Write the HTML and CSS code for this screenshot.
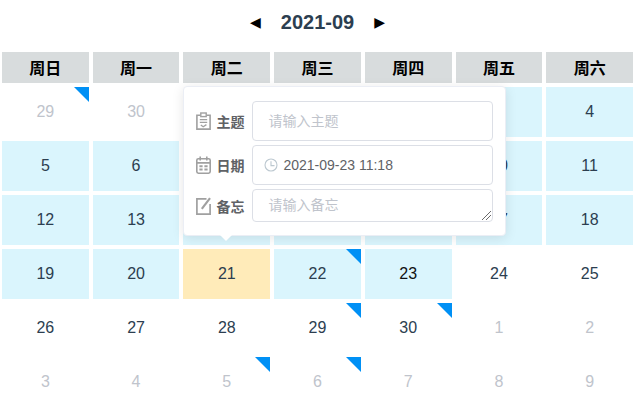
FILE: index.html
```html
<!DOCTYPE html>
<html lang="zh-CN">
<head>
<meta charset="utf-8">
<title>Calendar</title>
<link rel="stylesheet" href="styles.css">
</head>
<body>
<div class="calendar">
  <header class="cal-head">
    <span class="arrow">◀</span>
    <span class="month">2021-09</span>
    <span class="arrow">▶</span>
  </header>
  <div class="grid">
    <div class="wk">周日</div><div class="wk">周一</div><div class="wk">周二</div><div class="wk">周三</div><div class="wk">周四</div><div class="wk">周五</div><div class="wk">周六</div>

    <div class="day muted mark">29</div><div class="day muted">30</div><div class="day muted">31</div><div class="day busy">1</div><div class="day busy">2</div><div class="day busy">3</div><div class="day busy">4</div>
    <div class="day busy">5</div><div class="day busy">6</div><div class="day busy">7</div><div class="day busy">8</div><div class="day busy">9</div><div class="day busy">10</div><div class="day busy">11</div>
    <div class="day busy">12</div><div class="day busy">13</div><div class="day busy">14</div><div class="day busy">15</div><div class="day busy">16</div><div class="day busy">17</div><div class="day busy">18</div>
    <div class="day busy">19</div><div class="day busy">20</div>
    <div class="day today">21
      <div class="popover">
        <div class="row r-tall">
          <label class="lbl">
            <svg class="ico" viewBox="0 0 15 18" fill="none" stroke="#a0a0a0" stroke-width="1.6"><path d="M4.5 3.2H.9v13.9h13.2V3.2h-3.6"/><rect x="4.8" y="1" width="5.4" height="3.6" fill="#fff" stroke-width="1.4"/><path d="M3.8 7.6h7.4M3.8 10.4h7.4M4.8 13l2.4 1.8L10.4 12.6" stroke-width="1.3"/></svg>
            <span>主题</span>
          </label>
          <div class="input ph">请输入主题</div>
        </div>
        <div class="row r-tall">
          <label class="lbl">
            <svg class="ico" viewBox="0 0 15 18" fill="none" stroke="#a0a0a0" stroke-width="1.6"><rect x=".8" y="2.7" width="13.4" height="14.5" rx="1.6"/><path d="M.8 6.9h13.4M4.2 .5v4M10.8 .5v4"/><path d="M3.4 10.2h3.2M8.4 10.2h3.2M3.4 13.6h3.2M8.4 13.6h3.2" stroke-width="2"/></svg>
            <span>日期</span>
          </label>
          <div class="input date">
            <svg class="clock" viewBox="0 0 14 14" fill="none" stroke="#bcc8d0" stroke-width="1.1"><circle cx="7" cy="7" r="6"/><path d="M7 3.2V7.6H10.5"/></svg>
            <span>2021-09-23 11:18</span>
          </div>
        </div>
        <div class="row">
          <label class="lbl">
            <svg class="ico" viewBox="0 0 15 18" fill="none" stroke="#a0a0a0" stroke-width="1.7"><path d="M10.5 1.9H.9v15.2h13.2V7"/><path d="M5.8 11.8L14 1.2" stroke-width="2.2"/></svg>
            <span>备忘</span>
          </label>
          <div class="input area ph">请输入备忘
            <svg class="grip" viewBox="0 0 9 9" stroke="#6b6b6b" stroke-width="1"><path d="M0 9L9 0M4 9L9 4"/></svg>
          </div>
        </div>
        <i class="tip"></i>
      </div>
    </div>
    <div class="day busy mark">22</div><div class="day busy strong">23</div><div class="day">24</div><div class="day">25</div>
    <div class="day">26</div><div class="day">27</div><div class="day">28</div><div class="day mark">29</div><div class="day mark">30</div><div class="day muted">1</div><div class="day muted">2</div>
    <div class="day muted">3</div><div class="day muted">4</div><div class="day muted mark">5</div><div class="day muted mark">6</div><div class="day muted">7</div><div class="day muted">8</div><div class="day muted">9</div>
  </div>
</div>
</body>
</html>
```
FILE: styles.css
```css
* { box-sizing: border-box; }
html, body { margin: 0; background: #fff; }
body { font-family: "Liberation Sans", Arial, "Noto Sans CJK SC", sans-serif; color: #2c3e50; overflow: hidden; }
.calendar { width: 636px; height: 413px; padding: 0 3px 0 2px; }
.cal-head { height: 52px; display: flex; align-items: center; justify-content: center; gap: 20px; padding: 0 0 8px 0; }
.month { font-size: 20px; font-weight: 700; line-height: 28px; }
.arrow { font-family: "DejaVu Sans", sans-serif; font-size: 14px; color: #000; line-height: 16px; }
.grid { display: grid; grid-template-columns: repeat(7, 1fr); grid-template-rows: 31px repeat(6, 50px); gap: 4px; }
.wk { background: #d8dcdd; color: #000; font: 700 16px/31px "Noto Sans CJK SC", sans-serif; text-align: center; }
.day { position: relative; font-size: 16px; line-height: 50px; text-align: center; }
.busy { background: #daf5fd; }
.today { background: #ffebb9; }
.muted { color: #c0c4cc; }
.strong { color: #111; }
.mark::after { content: ""; position: absolute; top: 0; right: 0; border-style: solid; border-width: 0 15px 15px 0; border-color: transparent #0090f5 transparent transparent; }
.popover { position: absolute; left: 0; bottom: 63px; z-index: 5; width: 323px; height: 150px; padding: 14px 12px 13px 12px; background: #fff; border: 1px solid #ebeef5; border-radius: 4px; box-shadow: 0 2px 12px rgba(0, 0, 0, .1); display: flex; flex-direction: column; gap: 4px; text-align: left; color: #606266; line-height: normal; }
.row { display: flex; align-items: center; }
.r-tall { height: 40px; }
.lbl { width: 56px; flex: none; display: flex; align-items: center; gap: 5px; font: 700 14px/18px "Noto Sans CJK SC", sans-serif; color: #606266; }
.lbl span { white-space: nowrap; }
.ico { width: 15px; height: 18px; flex: none; }
.input { position: relative; flex: 1; height: 40px; padding: 0 15px; border: 1px solid #dcdfe6; border-radius: 4px; font-size: 14px; line-height: 38px; font-family: "Liberation Sans", "Noto Sans CJK SC", sans-serif; }
.ph { color: #c0c4cc; }
.date { display: flex; align-items: center; gap: 5px; padding-left: 11px; color: #606266; }
.clock { width: 14px; height: 14px; flex: none; }
.area { height: 33px; line-height: 30px; }
.grip { position: absolute; right: 1px; bottom: 1px; width: 9px; height: 9px; }
.tip { position: absolute; left: 36px; bottom: -6px; width: 0; height: 0; border-style: solid; border-width: 6px 6px 0 6px; border-color: #fff transparent transparent transparent; }
```
